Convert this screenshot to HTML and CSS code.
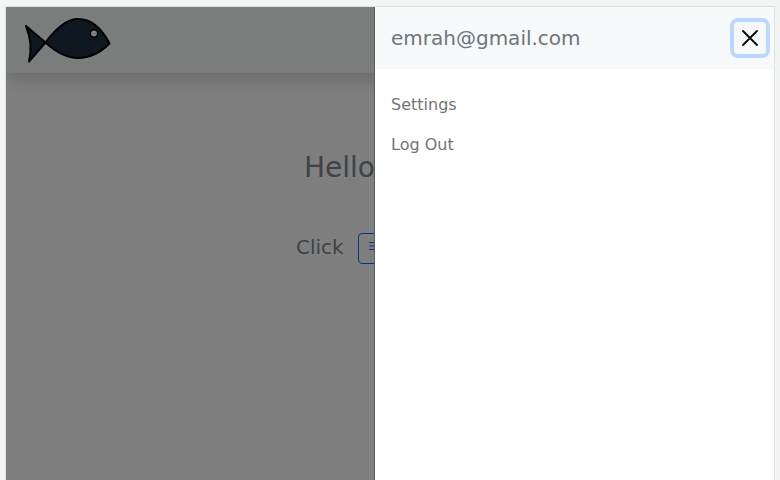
FILE: index.html
```
<!DOCTYPE html>
<html lang="en">
<head>
<meta charset="utf-8">
<title>Account menu</title>
<link rel="stylesheet" href="styles.css">
</head>
<body>
<div class="window">
  <div class="page">
    <header class="navbar">
      <svg class="logo" width="88" height="48" viewBox="0 0 88 48" role="img" aria-label="Fish">
        <g fill="#1f3140" stroke="#000" stroke-width="2" stroke-linejoin="round">
          <path d="M2 9 L21.500 25.500 L5 44.500 C8 32 7 21 2 9 Z"/>
          <path d="M21.500 25.500 C33 10 43 2 54 2 C68 2 78 12 85.500 26.500 C76 36 65 41 54 41 C43 41 32 35 21.500 25.500 Z"/>
        </g>
        <circle cx="70" cy="16.500" r="3.700" fill="#fff" stroke="#000" stroke-width="1.500"/>
      </svg>
    </header>
    <main class="hero">
      <h1 class="greeting">Hello</h1>
      <div class="prompt">
        <span>Click</span>
        <button class="menu-button" type="button" aria-label="Open menu">
          <svg width="16" height="16" viewBox="0 0 16 16" fill="none" stroke="currentColor" stroke-linecap="round"><path d="M2.500 3.500h11M2.500 7h11M2.500 10.500h11"/></svg>
        </button>
      </div>
    </main>
  </div>
  <div class="backdrop"></div>
  <aside class="panel" aria-labelledby="account">
    <div class="panel-header">
      <h2 class="account" id="account">emrah@gmail.com</h2>
      <button class="close" type="button" aria-label="Close">
        <svg width="16" height="16" viewBox="0 0 16 16" stroke="#000" stroke-width="1.800" stroke-linecap="round"><path d="M1 1l14 14M15 1L1 15"/></svg>
      </button>
    </div>
    <nav class="links">
      <a href="#settings">Settings</a>
      <a href="#logout">Log Out</a>
    </nav>
  </aside>
</div>
</body>
</html>
```
FILE: styles.css
```
* { box-sizing: border-box; }

body {
  margin: 0;
  height: 100vh;
  padding: 6px 5px 0;
  overflow: hidden;
  background: #f3f5f4;
  font-family: "DejaVu Sans", sans-serif;
}

h1, h2 { margin: 0; font-weight: 400; }

.window {
  position: relative;
  height: 100%;
  overflow: hidden;
  border: 1px solid #dee2e2;
  border-bottom: 0;
  background: #fff;
}

.navbar {
  padding: 10px 18px 8px;
  background: #f5fbf8;
  box-shadow: 0 8px 16px rgba(0, 0, 0, 0.15);
}

.logo { display: block; }

.hero {
  width: 188px;
  margin: 0 auto;
  padding-top: 78px;
  color: #7c868e;
}

.greeting {
  padding-left: 8px;
  font-size: 28px;
  line-height: 34px;
}

.prompt {
  display: flex;
  align-items: flex-start;
  gap: 14px;
  margin-top: 48px;
  font-size: 20px;
  line-height: 28px;
}

.menu-button {
  display: flex;
  width: 48px;
  height: 31px;
  padding: 5px 8px;
  border: 1px solid #0d6efd;
  border-radius: 4px;
  background: transparent;
  color: #0d6efd;
}

.backdrop {
  position: absolute;
  inset: 0;
  background: rgba(0, 0, 0, 0.5);
}

.panel {
  position: absolute;
  top: 0;
  right: 0;
  bottom: 0;
  width: 400px;
  max-width: 100%;
  border-left: 1px solid #5b5b5b;
  background: #fff;
}

.panel-header {
  display: flex;
  align-items: center;
  justify-content: space-between;
  padding: 15px 8px 15px 16px;
  background: #f8f9fb;
}

.account {
  color: #6c757d;
  font-size: 20px;
  line-height: 32px;
}

.close {
  display: flex;
  padding: 8px;
  border: 0;
  border-radius: 4px;
  background: transparent;
  box-shadow: 0 0 0 4px #bcd8fc;
}

.links {
  display: flex;
  flex-direction: column;
  align-items: flex-start;
  padding: 16px;
}

.links a {
  padding: 8px 0;
  color: #747474;
  font-size: 16px;
  line-height: 24px;
  text-decoration: none;
}
```
